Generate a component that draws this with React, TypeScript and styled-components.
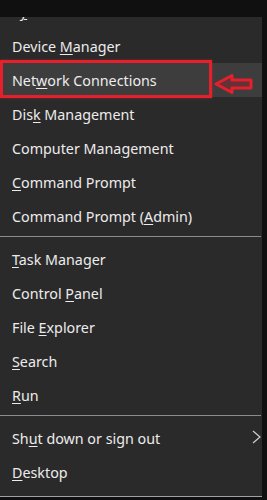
import React from "react";
import styled, { createGlobalStyle } from "styled-components";

const Global = createGlobalStyle`
  html, body { margin: 0; padding: 0; background: #101010; }
  body { width: 267px; height: 500px; overflow: hidden; font-family: "Segoe UI", "Noto Sans", "Open Sans", sans-serif; }
`;

const Screen = styled.div`
  display: flex;
  flex-direction: column;
  width: 267px;
  height: 500px;
  background: #101010;
`;

const TopBand = styled.div`
  height: 17px;
  flex: none;
`;

const Body = styled.div`
  display: flex;
  height: 480px;
`;

const Panel = styled.div`
  width: 262px;
  height: 480px;
  overflow: hidden;
  background: #2b2a2b;
  border-bottom: 1px solid #a0a0a8;
  box-sizing: border-box;
`;

const List = styled.ul`
  list-style: none;
  margin: -23px 0 0 0;
  padding: 0;
`;

const Row = styled.li<{ $active?: boolean }>`
  position: relative;
  display: flex;
  align-items: center;
  height: 34px;
  padding-left: 12px;
  background: ${(p) => (p.$active ? "#3e3d3e" : "transparent")};
  color: #ececec;
  font-size: 14.3px;
  white-space: nowrap;
`;

const First = styled(Row)`
  height: 35px;
`;

const Label = styled.span`
  white-space: pre;
`;

const Key = styled.span`
  text-decoration: underline;
  text-decoration-thickness: 1px;
  text-underline-offset: 2px;
`;

const Separator = styled.li`
  height: 9px;
  display: flex;
  align-items: flex-start;
  padding-top: 3px;
  box-sizing: border-box;
  &::before {
    content: "";
    display: block;
    width: 261px;
    height: 1px;
    background: #8c8c90;
  }
`;

const Chevron = styled.svg`
  position: absolute;
  right: 1px;
  top: 9px;
`;

const RedBox = styled.div`
  position: absolute;
  left: 0;
  top: -3px;
  width: 212px;
  height: 38px;
  border: 3px solid #e3202b;
  box-sizing: border-box;
  box-shadow: 0 0 2px rgba(227, 32, 43, 0.6);
  pointer-events: none;
`;

const Arrow = styled.svg`
  position: absolute;
  left: 214px;
  top: 10px;
`;

type Item = { pre?: string; key: string; post?: string; sub?: boolean; active?: boolean };

const groups: Item[][] = [
  [
    { pre: "Device ", key: "M", post: "anager" },
    { pre: "Net", key: "w", post: "ork Connections", active: true },
    { pre: "Dis", key: "k", post: " Management" },
    { pre: "Computer Mana", key: "g", post: "ement" },
    { key: "C", post: "ommand Prompt" },
    { pre: "Command Prompt (", key: "A", post: "dmin)" },
  ],
  [
    { key: "T", post: "ask Manager" },
    { pre: "Control ", key: "P", post: "anel" },
    { pre: "File ", key: "E", post: "xplorer" },
    { key: "S", post: "earch" },
    { key: "R", post: "un" },
  ],
  [
    { pre: "Sh", key: "u", post: "t down or sign out", sub: true },
    { key: "D", post: "esktop" },
  ],
];

export default function App() {
  return (
    <>
      <Global />
      <Screen>
        <TopBand />
        <Body>
          <Panel>
            <List>
              <First>
                <Label>
                  S<Key>y</Key>stem
                </Label>
              </First>
              {groups.map((g, gi) => (
                <React.Fragment key={gi}>
                  {gi > 0 && <Separator />}
                  {g.map((it, i) => (
                    <Row key={i} $active={it.active}>
                      <Label>
                        {it.pre}
                        <Key>{it.key}</Key>
                        {it.post}
                      </Label>
                      {it.sub && (
                        <Chevron width="9" height="14" viewBox="0 0 9 14">
                          <path d="M1 1 L8 7 L1 13" fill="none" stroke="#cfcfcf" strokeWidth="1.2" />
                        </Chevron>
                      )}
                      {it.active && (
                        <>
                          <RedBox />
                          <Arrow width="40" height="22" viewBox="0 0 40 22">
                            <path
                              d="M2 11 L18 2.5 L18 7 L37 7 L37 15 L18 15 L18 19.5 Z"
                              fill="rgba(170,30,40,0.35)"
                              stroke="#e3202b"
                              strokeWidth="3"
                              strokeLinejoin="round"
                            />
                          </Arrow>
                        </>
                      )}
                    </Row>
                  ))}
                </React.Fragment>
              ))}
            </List>
          </Panel>
        </Body>
      </Screen>
    </>
  );
}
